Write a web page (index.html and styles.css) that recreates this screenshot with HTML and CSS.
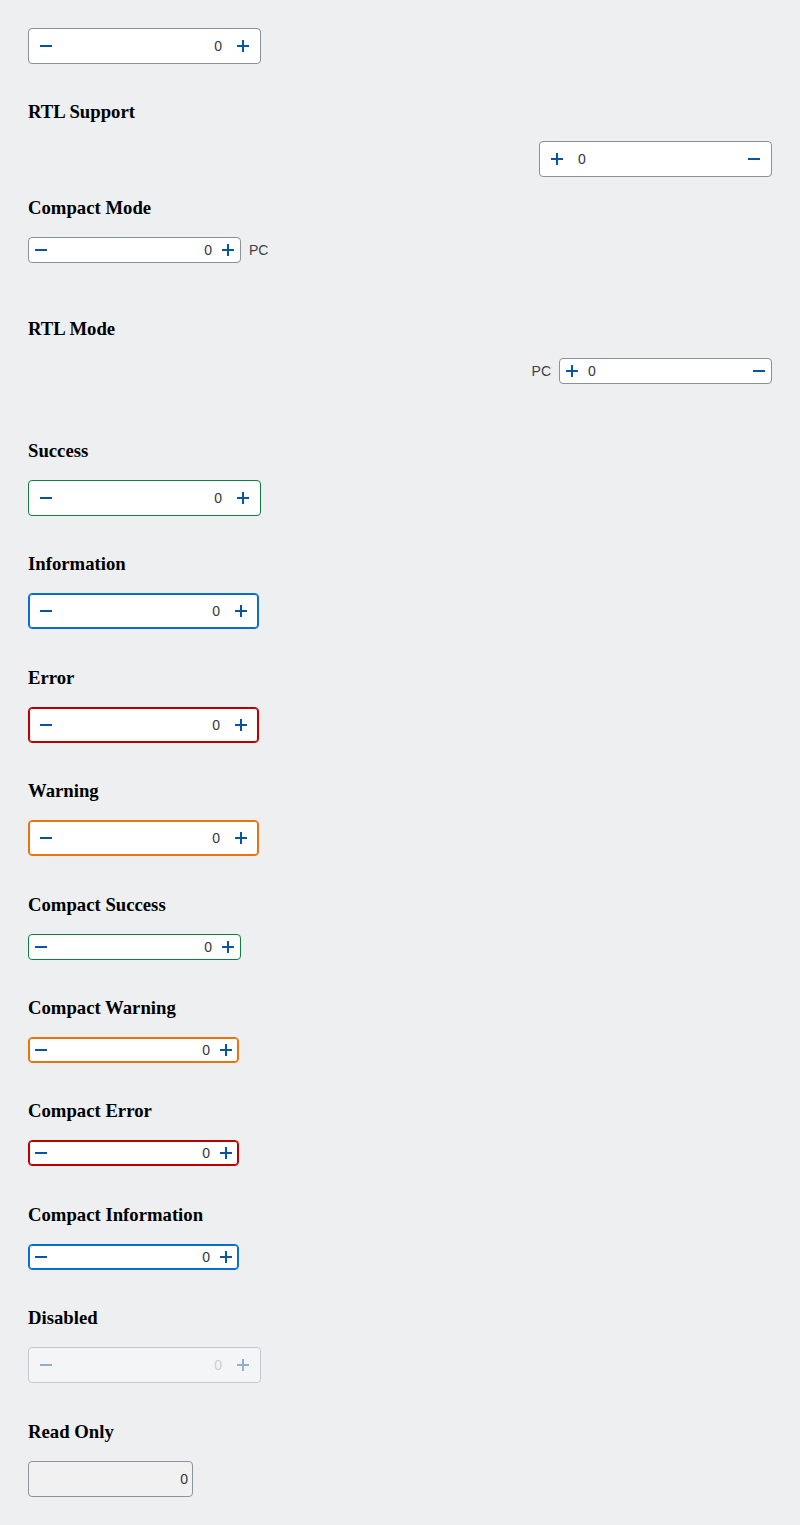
FILE: index.html
```html
<!DOCTYPE html>
<html lang="en">
<head>
<meta charset="utf-8">
<title>Step Input</title>
<link rel="stylesheet" href="styles.css">
</head>
<body>
<main class="page">

  <div class="step sp-36">
    <button class="step-btn" aria-label="Decrease"><svg class="ico" viewBox="0 0 12 12"><rect x="0" y="5" width="12" height="2"/></svg></button>
    <input class="step-value" value="0" aria-label="Value">
    <button class="step-btn" aria-label="Increase"><svg class="ico" viewBox="0 0 12 12"><rect x="0" y="5" width="12" height="2"/><rect x="5" y="0" width="2" height="12"/></svg></button>
  </div>

  <h3 class="title">RTL Support</h3>
  <div class="row sp-19" dir="rtl">
    <div class="step">
      <button class="step-btn" aria-label="Decrease"><svg class="ico" viewBox="0 0 12 12"><rect x="0" y="5" width="12" height="2"/></svg></button>
      <input class="step-value" value="0" aria-label="Value">
      <button class="step-btn" aria-label="Increase"><svg class="ico" viewBox="0 0 12 12"><rect x="0" y="5" width="12" height="2"/><rect x="5" y="0" width="2" height="12"/></svg></button>
    </div>
  </div>

  <h3 class="title">Compact Mode</h3>
  <div class="row sp-54">
    <div class="step step--compact">
      <button class="step-btn" aria-label="Decrease"><svg class="ico" viewBox="0 0 12 12"><rect x="0" y="5" width="12" height="2"/></svg></button>
      <input class="step-value" value="0" aria-label="Value">
      <button class="step-btn" aria-label="Increase"><svg class="ico" viewBox="0 0 12 12"><rect x="0" y="5" width="12" height="2"/><rect x="5" y="0" width="2" height="12"/></svg></button>
    </div>
    <span class="unit">PC</span>
  </div>

  <h3 class="title">RTL Mode</h3>
  <div class="row sp-55" dir="rtl">
    <div class="step step--compact">
      <button class="step-btn" aria-label="Decrease"><svg class="ico" viewBox="0 0 12 12"><rect x="0" y="5" width="12" height="2"/></svg></button>
      <input class="step-value" value="0" aria-label="Value">
      <button class="step-btn" aria-label="Increase"><svg class="ico" viewBox="0 0 12 12"><rect x="0" y="5" width="12" height="2"/><rect x="5" y="0" width="2" height="12"/></svg></button>
    </div>
    <span class="unit">PC</span>
  </div>

  <h3 class="title">Success</h3>
  <div class="step step--success sp-36">
    <button class="step-btn" aria-label="Decrease"><svg class="ico" viewBox="0 0 12 12"><rect x="0" y="5" width="12" height="2"/></svg></button>
    <input class="step-value" value="0" aria-label="Value">
    <button class="step-btn" aria-label="Increase"><svg class="ico" viewBox="0 0 12 12"><rect x="0" y="5" width="12" height="2"/><rect x="5" y="0" width="2" height="12"/></svg></button>
  </div>

  <h3 class="title">Information</h3>
  <div class="step step--state step--info sp-37">
    <button class="step-btn" aria-label="Decrease"><svg class="ico" viewBox="0 0 12 12"><rect x="0" y="5" width="12" height="2"/></svg></button>
    <input class="step-value" value="0" aria-label="Value">
    <button class="step-btn" aria-label="Increase"><svg class="ico" viewBox="0 0 12 12"><rect x="0" y="5" width="12" height="2"/><rect x="5" y="0" width="2" height="12"/></svg></button>
  </div>

  <h3 class="title">Error</h3>
  <div class="step step--state step--error sp-36">
    <button class="step-btn" aria-label="Decrease"><svg class="ico" viewBox="0 0 12 12"><rect x="0" y="5" width="12" height="2"/></svg></button>
    <input class="step-value" value="0" aria-label="Value">
    <button class="step-btn" aria-label="Increase"><svg class="ico" viewBox="0 0 12 12"><rect x="0" y="5" width="12" height="2"/><rect x="5" y="0" width="2" height="12"/></svg></button>
  </div>

  <h3 class="title">Warning</h3>
  <div class="step step--state step--warning sp-37">
    <button class="step-btn" aria-label="Decrease"><svg class="ico" viewBox="0 0 12 12"><rect x="0" y="5" width="12" height="2"/></svg></button>
    <input class="step-value" value="0" aria-label="Value">
    <button class="step-btn" aria-label="Increase"><svg class="ico" viewBox="0 0 12 12"><rect x="0" y="5" width="12" height="2"/><rect x="5" y="0" width="2" height="12"/></svg></button>
  </div>

  <h3 class="title">Compact Success</h3>
  <div class="step step--compact step--success sp-36">
    <button class="step-btn" aria-label="Decrease"><svg class="ico" viewBox="0 0 12 12"><rect x="0" y="5" width="12" height="2"/></svg></button>
    <input class="step-value" value="0" aria-label="Value">
    <button class="step-btn" aria-label="Increase"><svg class="ico" viewBox="0 0 12 12"><rect x="0" y="5" width="12" height="2"/><rect x="5" y="0" width="2" height="12"/></svg></button>
  </div>

  <h3 class="title">Compact Warning</h3>
  <div class="step step--compact step--state step--warning sp-36">
    <button class="step-btn" aria-label="Decrease"><svg class="ico" viewBox="0 0 12 12"><rect x="0" y="5" width="12" height="2"/></svg></button>
    <input class="step-value" value="0" aria-label="Value">
    <button class="step-btn" aria-label="Increase"><svg class="ico" viewBox="0 0 12 12"><rect x="0" y="5" width="12" height="2"/><rect x="5" y="0" width="2" height="12"/></svg></button>
  </div>

  <h3 class="title">Compact Error</h3>
  <div class="step step--compact step--state step--error sp-37">
    <button class="step-btn" aria-label="Decrease"><svg class="ico" viewBox="0 0 12 12"><rect x="0" y="5" width="12" height="2"/></svg></button>
    <input class="step-value" value="0" aria-label="Value">
    <button class="step-btn" aria-label="Increase"><svg class="ico" viewBox="0 0 12 12"><rect x="0" y="5" width="12" height="2"/><rect x="5" y="0" width="2" height="12"/></svg></button>
  </div>

  <h3 class="title">Compact Information</h3>
  <div class="step step--compact step--state step--info sp-36">
    <button class="step-btn" aria-label="Decrease"><svg class="ico" viewBox="0 0 12 12"><rect x="0" y="5" width="12" height="2"/></svg></button>
    <input class="step-value" value="0" aria-label="Value">
    <button class="step-btn" aria-label="Increase"><svg class="ico" viewBox="0 0 12 12"><rect x="0" y="5" width="12" height="2"/><rect x="5" y="0" width="2" height="12"/></svg></button>
  </div>

  <h3 class="title">Disabled</h3>
  <div class="step step--disabled sp-37">
    <button class="step-btn" aria-label="Decrease" disabled><svg class="ico" viewBox="0 0 12 12"><rect x="0" y="5" width="12" height="2"/></svg></button>
    <input class="step-value" value="0" aria-label="Value" disabled>
    <button class="step-btn" aria-label="Increase" disabled><svg class="ico" viewBox="0 0 12 12"><rect x="0" y="5" width="12" height="2"/><rect x="5" y="0" width="2" height="12"/></svg></button>
  </div>

  <h3 class="title">Read Only</h3>
  <div class="step step--readonly">
    <input class="step-value" value="0" aria-label="Value" readonly>
  </div>

</main>
</body>
</html>
```

FILE: styles.css
```css
* {
  box-sizing: border-box;
}

html,
body {
  margin: 0;
  background: #edeff0;
}

.page {
  display: flex;
  flex-direction: column;
  align-items: flex-start;
  padding: 28px 28px 28px;
  min-height: 1525px;
}

.title {
  margin: 0 0 17px;
  font-family: "Liberation Serif", "Times New Roman", serif;
  font-size: 18.72px;
  font-weight: 700;
  line-height: 24px;
  color: #000;
}

.sp-19 { margin-bottom: 19px; }
.sp-36 { margin-bottom: 36px; }
.sp-37 { margin-bottom: 37px; }
.sp-54 { margin-bottom: 54px; }
.sp-55 { margin-bottom: 55px; }

.row {
  display: flex;
  align-items: center;
  gap: 8px;
  align-self: stretch;
}

.unit {
  font-family: "Liberation Sans", Arial, sans-serif;
  font-size: 14px;
  color: #3d4146;
}

.step {
  display: flex;
  align-items: stretch;
  width: 233px;
  height: 36px;
  border: 1px solid #89919a;
  border-radius: 4px;
  background: #fff;
  flex: none;
}

.step-btn {
  flex: none;
  width: 34px;
  display: flex;
  align-items: center;
  justify-content: center;
  padding: 0;
  margin: 0;
  border: 0;
  background: transparent;
  cursor: pointer;
}

.ico {
  width: 12px;
  height: 12px;
  display: block;
  fill: #0854a0;
}

.step-value {
  flex: 1;
  min-width: 0;
  width: 100%;
  margin: 0;
  padding: 0 4px;
  border: 0;
  outline: none;
  background: transparent;
  font-family: "Liberation Sans", Arial, sans-serif;
  font-size: 14px;
  color: #32363a;
  text-align: end;
}

.row[dir="rtl"] .step-value {
  text-align: left;
}

.step--compact {
  width: 213px;
  height: 26px;
}

.step--compact .step-btn {
  width: 24px;
}

.step--state {
  width: 231px;
}

.step--compact.step--state {
  width: 211px;
}

.step--success {
  border-color: #107e3e;
}

.step--info {
  border-color: #0a6ed1;
  box-shadow: inset 0 0 0 1px #0a6ed1;
}

.step--error {
  border-color: #bb0000;
  box-shadow: inset 0 0 0 1px #bb0000;
}

.step--warning {
  border-color: #e9730c;
  box-shadow: inset 0 0 0 1px #e9730c;
}

.step--disabled {
  opacity: 0.4;
}

.step--disabled .step-btn {
  cursor: default;
}

.step--disabled .step-value {
  color: #9a9ea3;
}

.step--readonly {
  width: 165px;
  background: #f1f1f1;
  border-color: #8c939a;
}
```
